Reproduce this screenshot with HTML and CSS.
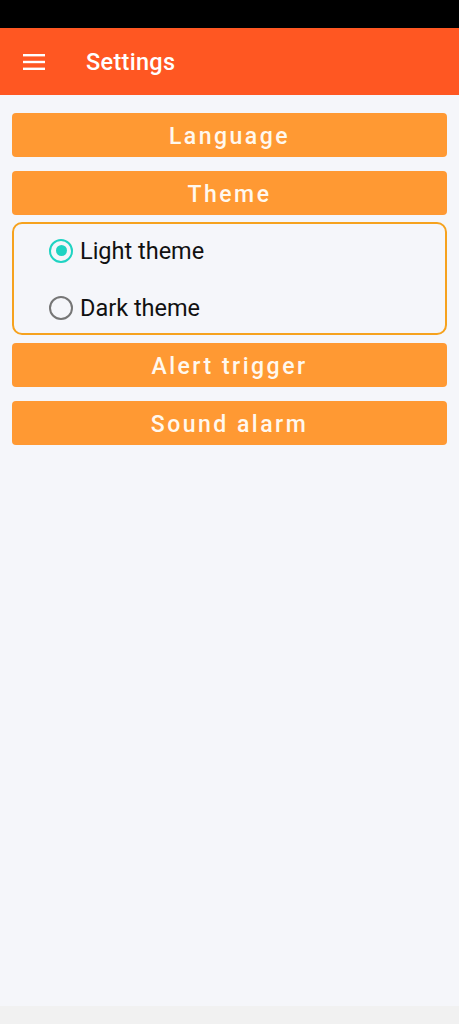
FILE: index.html
```html
<!DOCTYPE html>
<html>
<head>
<meta charset="utf-8">
<link rel="stylesheet" href="styles.css">
</head>
<body>
<div class="screen">
  <div class="status"></div>
  <header class="toolbar">
    <svg class="menu" width="22" height="16" viewBox="0 0 22 16"><rect x="0" y="0" width="22" height="2.4" fill="#fff"/><rect x="0" y="6.8" width="22" height="2.4" fill="#fff"/><rect x="0" y="13.6" width="22" height="2.4" fill="#fff"/></svg>
    <h1 class="title">Settings</h1>
  </header>
  <main class="content">
    <div class="btn">Language</div>
    <div class="btn">Theme</div>
    <div class="group">
      <label class="radio"><span class="dot checked"></span><span>Light theme</span></label>
      <label class="radio"><span class="dot"></span><span>Dark theme</span></label>
    </div>
    <div class="btn">Alert trigger</div>
    <div class="btn">Sound alarm</div>
  </main>
  <div class="navbar"></div>
</div>
</body>
</html>
```
FILE: styles.css
```css
html, body { margin: 0; padding: 0; }
body { font-family: Roboto, "Noto Sans", sans-serif; background: #f5f6fa; }
.screen { width: 459px; height: 1024px; display: flex; flex-direction: column; background: #f5f6fa; }
.status { height: 28px; background: #000; flex: none; }
.toolbar { height: 67px; background: #ff5722; display: flex; align-items: center; flex: none; }
.menu { margin-left: 23px; }
.title { margin: 0 0 0 41px; color: #fff; font-size: 23.5px; font-weight: 500; letter-spacing: 0.3px; }
.content { flex: 1; padding: 18px 12px 0 12px; display: flex; flex-direction: column; gap: 14px; }
.btn { height: 44px; box-sizing: border-box; padding-top: 2px; background: #ff9933; border-radius: 4px; color: #fff8ee; font-size: 23px; font-weight: 500; letter-spacing: 2.5px; display: flex; align-items: center; justify-content: center; }
.group { border: 2px solid #f6a21e; border-radius: 10px; margin: -7px 0 -6px 0; display: flex; flex-direction: column; padding: 0 0 0 35px; box-sizing: border-box; height: 113px; justify-content: center; gap: 13px; }
.radio { display: flex; align-items: center; gap: 7px; font-size: 23.5px; color: #111; height: 44px; padding-top: 1px; box-sizing: border-box; }
.dot { width: 20px; height: 20px; border: 2px solid #767676; border-radius: 50%; position: relative; flex: none; }
.dot.checked { border-color: #1fd3c2; }
.dot.checked::after { content: ""; position: absolute; left: 4.5px; top: 4.5px; width: 11px; height: 11px; border-radius: 50%; background: #1fd3c2; }
.navbar { height: 18px; background: #f1f1f1; flex: none; }
```
